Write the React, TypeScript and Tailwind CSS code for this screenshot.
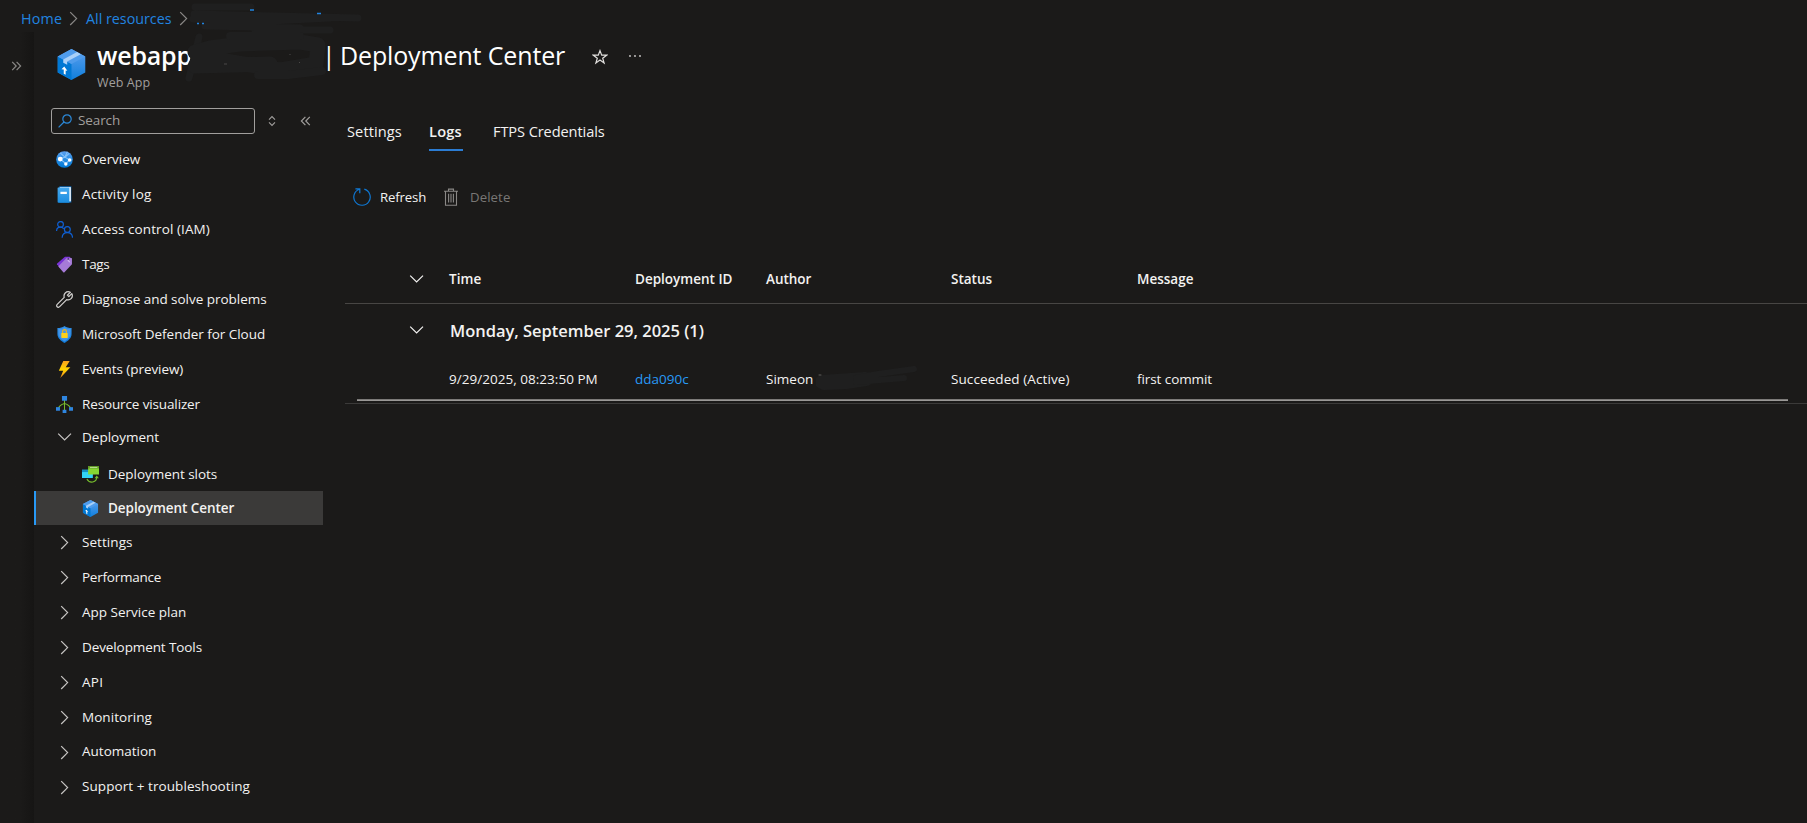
import React from "react";

type IconProps = { className?: string };

function PackageIcon({ className }: IconProps) {
  return (
    <svg viewBox="0 0 18 18" className={className}>
      <defs>
        <linearGradient id="pkgR" x1="0" y1="0" x2="0" y2="1">
          <stop offset="0" stopColor="#5ea0ef" />
          <stop offset="1" stopColor="#0f7fdc" />
        </linearGradient>
      </defs>
      <path d="M9 0 17 4.300V13.600L9 18 1 13.600V4.300Z" fill="url(#pkgR)" />
      <path d="M1 4.300 9 8.700V18L1 13.600Z" fill="#0078d4" />
      <path d="M9 0 17 4.300 9 8.700 1 4.300Z" fill="#4f9cec" />
      <path d="M12.200 1.800 14.400 3 6.500 7.300V9.200L4.200 8V6.100Z" fill="#a9d0f8" />
      <path d="M3.200 11.700 4.800 10.200 6.600 12.600 5.600 12.500V15L4.500 14.400V11.900Z" fill="#fff" />
    </svg>
  );
}

function GlobeIcon({ className }: IconProps) {
  return (
    <svg viewBox="0 0 18 18" className={className}>
      <defs>
        <linearGradient id="glb" x1="0" y1="0" x2="0" y2="1">
          <stop offset="0" stopColor="#5ea0ef" />
          <stop offset="0.400" stopColor="#2f8fe4" />
          <stop offset="1" stopColor="#0078d4" />
        </linearGradient>
      </defs>
      <circle cx="9" cy="9" r="8.800" fill="url(#glb)" />
      <path d="M4.500 8.300 9.500 6.500 14 2.500M9.500 6.500 4.500 2M9.500 6.500 14.500 9.500M4.500 8.500 10.500 13.500 14.500 9.500M9.500 6.500 12 0.800" stroke="#83c0f7" strokeWidth="1.200" fill="none" />
      <circle cx="4.500" cy="8.600" r="2.600" fill="#fff" />
      <circle cx="14.500" cy="9.500" r="1.900" fill="#fff" />
      <circle cx="10.400" cy="13.700" r="1.800" fill="#fff" />
    </svg>
  );
}

function LogIcon({ className }: IconProps) {
  return (
    <svg viewBox="0 0 18 18" className={className}>
      <defs>
        <linearGradient id="lg" x1="0" y1="0" x2="0" y2="1">
          <stop offset="0" stopColor="#45a8ee" />
          <stop offset="1" stopColor="#1b8de0" />
        </linearGradient>
      </defs>
      <path d="M3.500 0.300H16.200V17.500H3.500Z" fill="#0f6cbd" />
      <path d="M4 1.200H15.700V16.300H4Z" fill="#fff" />
      <path d="M1.700 2Q1.700 1.600 2.100 1.600H14.200V17.800H2.500Q1.700 17.800 1.700 17Z" fill="url(#lg)" />
      <rect x="4.700" y="6.100" width="6.800" height="2.400" fill="#fff" />
    </svg>
  );
}

function PeopleIcon({ className }: IconProps) {
  return (
    <svg viewBox="0 0 18 18" className={className} fill="none" stroke="#0f5fd2" strokeWidth="1.300">
      <circle cx="4.800" cy="3.600" r="3" />
      <circle cx="12" cy="9" r="3.100" />
      <path d="M0.600 10.600C0.700 8.200 2.300 6.600 4.600 6.600 6 6.600 7.200 7 8.200 8.200" />
      <path d="M6.500 17.700C6.600 14.400 8.900 12.200 12 12.200S17.400 14.400 17.500 17.700" />
    </svg>
  );
}

function TagIcon({ className }: IconProps) {
  return (
    <svg viewBox="0 0 18 18" className={className}>
      <path d="M9.500 0.700H14.500L15.500 2 4 12.500 1 8.800Q0.800 8.400 1.200 8Z" fill="#7a34d6" />
      <path d="M11.400 1.800 16.300 2Q16.900 2.100 16.900 2.800V8.800L8.700 17.400Q8.200 17.800 7.700 17.300L2.700 11.500Q2.300 11 2.800 10.500Z" fill="#a67bd8" />
      <path d="M12.900 2.200V5.200L15 6.600" stroke="#e2d0f7" strokeWidth="0.900" fill="none" />
      <circle cx="13" cy="3.100" r="1" fill="#4b2a7a" />
    </svg>
  );
}

function WrenchIcon({ className }: IconProps) {
  return (
    <svg viewBox="0 0 18 18" className={className} fill="none" stroke="#d2d0ce" strokeWidth="1.300" strokeLinejoin="round">
      <path d="M15.200 1.300 12.100 4.400 13.600 5.900 16.700 2.800C17.600 4.600 17.400 6.700 16 8.100 14.700 9.400 12.900 9.700 11.300 9.100L3.900 16.600C3.100 17.400 1.900 17.400 1.200 16.700S0.500 14.900 1.300 14.100L8.700 6.700C8.200 5 8.600 3.300 9.800 2.100 11.300 0.700 13.400 0.500 15.200 1.300Z" />
    </svg>
  );
}

function ShieldIcon({ className }: IconProps) {
  return (
    <svg viewBox="0 0 18 18" className={className}>
      <defs>
        <linearGradient id="shd" x1="0" y1="0" x2="0" y2="1">
          <stop offset="0" stopColor="#2f8fe6" />
          <stop offset="1" stopColor="#0f7bdb" />
        </linearGradient>
      </defs>
      <path d="M9 0C11 1.600 13.500 2.200 16.500 2.200V8.500C16.500 13 12.500 16 9 18 5.500 16 1.500 13 1.500 8.500V2.200C4.500 2.200 7 1.600 9 0Z" fill="url(#shd)" />
      <path d="M9 1.600C10.800 2.800 12.800 3.200 15.300 3.300V8.500C15.300 12 12.200 14.600 9 16.500 5.800 14.600 2.700 12 2.700 8.500V3.300C5.200 3.200 7.200 2.800 9 1.600Z" fill="#5ea0ef" opacity="0.600" />
      <path d="M7 8V5.800A2 2 0 0 1 11 5.800V8" fill="none" stroke="#f2b416" strokeWidth="1.200" />
      <rect x="5.600" y="7.400" width="6.800" height="5.200" rx="0.600" fill="#ffd11a" />
    </svg>
  );
}

function BoltIcon({ className }: IconProps) {
  return (
    <svg viewBox="0 0 18 18" className={className}>
      <defs>
        <linearGradient id="blt" x1="0" y1="0" x2="0" y2="1">
          <stop offset="0" stopColor="#faa21d" />
          <stop offset="0.500" stopColor="#ffd400" />
          <stop offset="1" stopColor="#f78d1e" />
        </linearGradient>
      </defs>
      <path d="M7.700 0H14.500L10.300 6.700H15.200L4.500 18 7.600 10.300H3Z" fill="url(#blt)" />
    </svg>
  );
}

function VisualizerIcon({ className }: IconProps) {
  return (
    <svg viewBox="0 0 18 18" className={className}>
      <path d="M9 4V15M9 8C5.500 9 3 11 2.500 13.500M9 8C12.500 9 15 11 15.500 13.500" stroke="#76bc2d" strokeWidth="1.100" fill="none" />
      <rect x="6.300" y="0" width="5.400" height="5" fill="#2f86e0" />
      <rect x="0" y="11.800" width="4.200" height="3.800" fill="#2f86e0" />
      <rect x="13.800" y="11.800" width="4.200" height="3.800" fill="#2f86e0" />
      <rect x="7" y="14.600" width="4" height="3.400" fill="#2f86e0" />
    </svg>
  );
}

function SlotsIcon({ className }: IconProps) {
  return (
    <svg viewBox="0 0 18 18" className={className}>
      <rect x="0" y="4" width="11.500" height="8.700" fill="#32d4f5" />
      <rect x="0" y="4" width="6.500" height="2.400" fill="#1490c4" />
      <rect x="6.500" y="0" width="11.500" height="9" fill="#86d633" />
      <rect x="6.500" y="0" width="11.500" height="2.600" fill="#5e9624" />
      <rect x="8.300" y="1" width="8" height="0.900" fill="#cdeaa9" />
      <path d="M5.200 13.800C6.500 16.500 9 17.400 11.500 17 14 16.500 15.600 14.600 15.600 11.500" stroke="#76bc2d" strokeWidth="1.200" fill="none" />
      <path d="M13.300 12.900 15.600 10 17.900 12.900Z" fill="#76bc2d" />
    </svg>
  );
}

function Chevron({ dir, className = "" }: { dir: "right" | "down"; className?: string }) {
  return (
    <svg viewBox="0 0 18 18" className={"h-[18px] w-[18px] shrink-0 " + className} fill="none" stroke="currentColor" strokeWidth="1.200">
      <path d={dir === "right" ? "M5.200 2.200 11.600 8.600 5.200 15" : "M2.200 5.600 8.600 12 15 5.600"} />
    </svg>
  );
}

function DoubleChevron({ flip = false }: { flip?: boolean }) {
  return (
    <svg viewBox="0 0 11 14" className={flip ? "h-[14px] w-[11px] -scale-x-100" : "h-[14px] w-[11px]"} fill="none" stroke="currentColor" strokeWidth="1.200">
      <path d="M1.200 2.800 5.200 7 1.200 11.200M5.600 2.800 9.600 7 5.600 11.200" />
    </svg>
  );
}

const items = [
  { label: "Overview", cls: "tracking-[-0.06px]", icon: GlobeIcon },
  { label: "Activity log", cls: "tracking-[0.18px]", icon: LogIcon },
  { label: "Access control (IAM)", cls: "tracking-[0.09px]", icon: PeopleIcon },
  { label: "Tags", cls: "tracking-[-0.3px]", icon: TagIcon },
  { label: "Diagnose and solve problems", cls: "tracking-[-0.03px]", icon: WrenchIcon },
  { label: "Microsoft Defender for Cloud", cls: "tracking-[-0.03px]", icon: ShieldIcon },
  { label: "Events (preview)", cls: "tracking-[-0.07px]", icon: BoltIcon },
  { label: "Resource visualizer", cls: "tracking-[-0.13px]", icon: VisualizerIcon },
];

const groups = [
  { label: "Settings", cls: "tracking-[0.06px]" },
  { label: "Performance", cls: "tracking-[-0.25px]" },
  { label: "App Service plan", cls: "" },
  { label: "Development Tools", cls: "tracking-[-0.1px]" },
  { label: "API", cls: "tracking-[0.3px]" },
  { label: "Monitoring", cls: "tracking-[0.05px]" },
  { label: "Automation", cls: "-mt-[2px]" },
  { label: "Support + troubleshooting", cls: "-mt-[2px] tracking-[0.07px]" },
];

const columns = "grid grid-cols-[65px_39px_186px_131px_185px_186px_1fr] items-center";

export default function App() {
  return (
    <div className="relative flex h-[823px] w-full flex-col overflow-hidden bg-[#1b1a19] font-['Open_Sans',sans-serif] text-[13.5px] whitespace-nowrap text-[#f3f2f1]">
      <nav className="flex h-8 shrink-0 items-center pt-[5px] pl-[21px] text-[14.3px] text-[#2184e0]">
        <span className="w-[41px] tracking-[0.2px]">Home</span>
        <Chevron dir="right" className="mx-[3px] text-[#8a8886]" />
        <span className="w-[86px]">All resources</span>
        <Chevron dir="right" className="ml-[3px] text-[#8a8886]" />
      </nav>

      <div className="flex min-h-0 flex-1">
        <div className="w-[34px] shrink-0 bg-gradient-to-r from-[#1b1a19] from-60% to-[#161514] pt-[27px] pl-[11px] text-[#8a8886]">
          <DoubleChevron />
        </div>

        <div className="flex min-w-0 flex-1 flex-col">
          <header className="flex h-[66px] shrink-0">
            <PackageIcon className="mt-[17px] ml-[22px] h-[31px] w-[31px]" />
            <div className="ml-[10px] flex flex-col">
              <div className="flex h-[48px] items-center text-[25px] text-white">
                <span className="w-[225px] font-semibold tracking-[-0.2px]">webapp</span>
                <span className="w-[18px]">|</span>
                <span className="w-[225px] tracking-[-0.14px]">Deployment Center</span>
                <svg viewBox="0 0 16 16" className="mt-[2px] ml-[27px] h-4 w-4" fill="none" stroke="#e1dfdd" strokeWidth="1.200">
                  <path d="M8 1.600 9.700 6.200H14.600L10.700 9.200 12.100 14 8 11.100 3.900 14 5.300 9.200 1.400 6.200H6.300Z" />
                </svg>
                <svg viewBox="0 0 14 4" className="ml-[20px] h-1 w-[14px]" fill="#d2d0ce">
                  <circle cx="2" cy="2" r="0.900" />
                  <circle cx="7" cy="2" r="0.900" />
                  <circle cx="12" cy="2" r="0.900" />
                </svg>
              </div>
              <span className="-mt-[6px] text-[12.5px] tracking-[0.1px] text-[#a19f9d]">Web App</span>
            </div>
          </header>

          <div className="flex min-h-0 flex-1">
            <aside className="w-[289px] shrink-0">
              <div className="mt-[10px] ml-[17px] flex h-[26px] items-center text-[#a19f9d]">
                <div className="flex h-[26px] w-[204px] items-center rounded-[3px] border border-[#a19f9d] pl-[6px]">
                  <svg viewBox="0 0 14 14" className="mr-[6px] h-[14px] w-[14px]" fill="none" stroke="#2b88d8" strokeWidth="1.200">
                    <circle cx="9" cy="5" r="4.200" />
                    <path d="M6 8 0.600 13.400" />
                  </svg>
                  <span className="-mt-[2px] tracking-[-0.1px]">Search</span>
                </div>
                <svg viewBox="0 0 8 12" className="-mt-px ml-[13px] h-3 w-2" fill="none" stroke="currentColor" strokeWidth="1.100">
                  <path d="M1 4.600 4 1.600 7 4.600M1 7.400 4 10.400 7 7.400" />
                </svg>
                <span className="-mt-px ml-[24px]">
                  <DoubleChevron flip />
                </span>
              </div>

              <ul className="mt-[8px]">
                {items.map(({ label, cls, icon: Icon }) => (
                  <li key={label} className="flex h-[35px] items-center pl-[22px]">
                    <Icon className="mr-[8px] h-[17px] w-[17px]" />
                    <span className={"ml-px " + cls}>{label}</span>
                  </li>
                ))}
                <li className="flex h-[32px] items-center pb-[2px] pl-[22px]">
                  <Chevron dir="down" className="mr-[8px] text-[#c8c6c4]" />
                  <span>Deployment</span>
                </li>
                <li className="flex h-[37px] items-center pt-[4px] pl-[48px]">
                  <SlotsIcon className="-mt-px mr-[9px] h-[17px] w-[17px]" />
                  <span className="tracking-[-0.04px]">Deployment slots</span>
                </li>
                <li className="flex h-[34px] items-center border-l-2 border-[#2899f5] bg-[#3b3a39] pl-[46px]">
                  <PackageIcon className="mr-[9px] h-[17px] w-[17px]" />
                  <span className="font-semibold tracking-[-0.06px]">Deployment Center</span>
                </li>
                {groups.map(({ label, cls }) => (
                  <li key={label} className="flex h-[35px] items-center pl-[22px]">
                    <Chevron dir="right" className="mr-[8px] text-[#c8c6c4]" />
                    <span className={cls}>{label}</span>
                  </li>
                ))}
              </ul>
            </aside>

            <main className="min-w-0 flex-1 pl-[22px]">
              <div className="flex h-[53px] pt-[15px] text-[14.6px]">
                <div className="ml-[2px] flex h-[38px] w-[55px] items-center tracking-[0.1px]">Settings</div>
                <div className="ml-[27px] flex h-[38px] w-[34px] items-center border-b-2 border-[#2b7cd3] pt-[2px] font-semibold tracking-[0.2px]">Logs</div>
                <div className="ml-[30px] flex h-[38px] items-center tracking-[-0.1px]">FTPS Credentials</div>
              </div>

              <div className="mt-[37px] flex h-[18px] items-center text-[13.2px]">
                <svg viewBox="0 0 18 18" className="ml-[8px] h-[18px] w-[18px]" fill="none" stroke="#0f78d4" strokeWidth="1.200">
                  <path d="M11.300 1.200A8.200 8.200 0 1 1 6.400 1.300M2.400 0.900H6.800V5.200" />
                </svg>
                <span className="mt-[2px] ml-[9px] w-[46px] tracking-[-0.15px]">Refresh</span>
                <svg viewBox="0 0 14 18" className="ml-[18px] h-[18px] w-[14px]" fill="none" stroke="#8a8886" strokeWidth="1.100">
                  <path d="M0 3.200H14M4.500 3V1.100H9.500V3M1.500 3.200V17.200H12.500V3.200M4.600 5.800V14.500M7 5.800V14.500M9.400 5.800V14.500" />
                </svg>
                <span className="mt-[2px] ml-[12px] tracking-[0.1px] text-[#797775]">Delete</span>
              </div>

              <div className={columns + " mt-[49px] h-[49px] border-b border-[#484644] font-semibold"}>
                <span />
                <Chevron dir="down" className="-ml-[2px]" />
                <span className="tracking-[0.1px]">Time</span>
                <span>Deployment ID</span>
                <span className="tracking-[-0.05px]">Author</span>
                <span>Status</span>
                <span>Message</span>
              </div>

              <div className={columns + " h-[54px] text-[16.5px] font-semibold"}>
                <span />
                <Chevron dir="down" className="-mt-[2px] -ml-[2px]" />
                <span className="ml-px tracking-[-0.02px]">Monday, September 29, 2025 (1)</span>
              </div>
              <div className={columns + " h-[41px] pt-[2px]"}>
                <span />
                <span />
                <span className="tracking-[0.03px]">9/29/2025, 08:23:50 PM</span>
                <span className="text-[#2899f5]">dda090c</span>
                <span className="flex items-center">
                  Simeon
                  <svg viewBox="0 0 104 28" className="-my-1 -mr-[110px] ml-[3px] h-7 w-[104px]" fill="none" stroke="#1f1f1f" strokeLinecap="round" strokeLinejoin="round">
                    <path d="M6 16 50 13 30 16 8 17" strokeWidth="14" />
                    <path d="M40 12 62 8 98 3M40 16 88 12" strokeWidth="6" />
                    <path d="M3 9h2" stroke="#605e5c" strokeWidth="1" />
                  </svg>
                </span>
                <span className="tracking-[0.09px]">Succeeded (Active)</span>
                <span className="tracking-[-0.08px]">first commit</span>
              </div>
              <div className="mr-[19px] ml-[12px] h-[2px] border-t border-[#7c7a78] bg-[#9a9896]" />
              <div className="mt-[2px] h-px bg-[#3b3a39]" />
            </main>
          </div>
        </div>
      </div>

      <svg viewBox="0 0 200 90" className="absolute top-0 left-[180px] h-[90px] w-[200px]" fill="none" stroke="#1f1f1f" strokeLinecap="round" strokeLinejoin="round">
        <path d="M15 7H71M14 14 178 18M13 19 90 21 150 18M75 30H150M25 26 120 28" strokeWidth="7" />
        <path d="M19 37 9 78" strokeWidth="7" />
        <path d="M15 52 30 48 60 44 120 42 138 45 136 64 100 70 40 60 20 62 15 66 90 64" strokeWidth="15" />
        <path d="M50 36 120 36M78 75 108 75 142 71" strokeWidth="8" />
        <path d="M17 23.500h2M22 23.500h2M70 10h4M137 13.500h4" stroke="#2184e0" strokeWidth="1.500" strokeLinecap="butt" />
        <path d="M44 64h3M110 54v1M119 63l1 -1" stroke="#4a4948" strokeWidth="1" strokeLinecap="butt" />
      </svg>
    </div>
  );
}
